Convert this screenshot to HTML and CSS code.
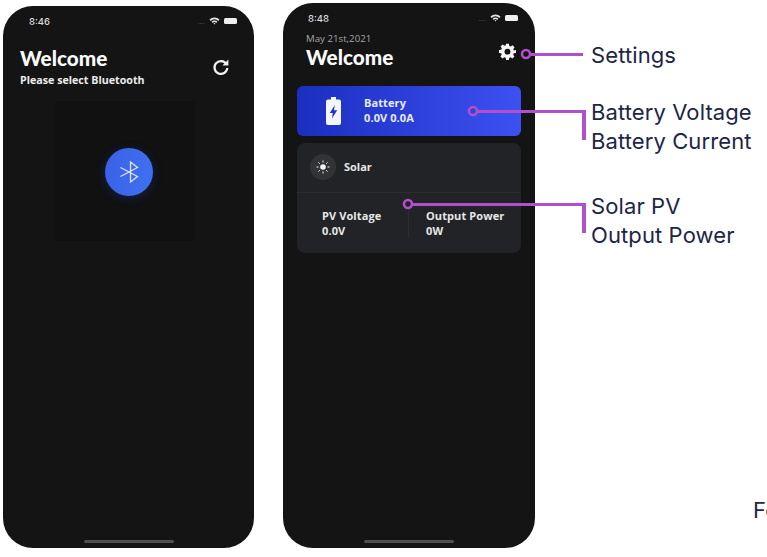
FILE: index.html
```html
<!DOCTYPE html>
<html lang="en">
<head>
  <meta charset="UTF-8" />
  <meta name="viewport" content="width=device-width, initial-scale=1.0"/>
  <title>Solar Controller App</title>
  <link rel="stylesheet" href="styles.css">
</head>
<body>
  <div class="page">

    <!-- Bluetooth screen -->
    <div class="phone phone-left">
      <div class="status">
        <span class="time">8:46</span>
        <div class="status-icons">
          <span class="dots">....</span>
          <svg width="11" height="8" viewBox="0 0 11 8"><path d="M0.5 2.6a7 7 0 0 1 10 0L9.3 3.9a5.3 5.3 0 0 0-7.6 0zM2.6 4.7a4 4 0 0 1 5.8 0L7.2 6a2.3 2.3 0 0 0-3.4 0zM4.5 6.5a1.4 1.4 0 0 1 2 0L5.5 7.6z" fill="#e6e6e6"/></svg>
          <span class="batt"></span>
        </div>
      </div>
      <div class="head-left">
        <div>
          <h1>Welcome</h1>
          <p class="sub">Please select Bluetooth</p>
        </div>
        <svg class="refresh" width="18" height="18" viewBox="0 0 18 18" fill="none">
          <path d="M14.4 6.2A6.4 6.4 0 1 0 15.3 10" stroke="#f2f2f2" stroke-width="2.2"/>
          <path d="M16.4 1.6v6h-6z" fill="#f2f2f2"/>
        </svg>
      </div>
      <div class="scan-box">
        <div class="bt-circle">
          <svg width="20" height="24" viewBox="0 0 20 24" fill="none">
            <path d="M1.5 7.500l17 9-7 5.500V2l7 5.500-17 9" stroke="#dfe6fb" stroke-width="1.300"/>
          </svg>
        </div>
      </div>
      <div class="home-bar"></div>
    </div>

    <!-- Dashboard screen -->
    <div class="phone phone-right">
      <div class="status status-right">
        <span class="time">8:48</span>
        <div class="status-icons">
          <span class="dots">....</span>
          <svg width="11" height="8" viewBox="0 0 11 8"><path d="M0.5 2.6a7 7 0 0 1 10 0L9.3 3.9a5.3 5.3 0 0 0-7.6 0zM2.6 4.7a4 4 0 0 1 5.8 0L7.2 6a2.3 2.3 0 0 0-3.4 0zM4.5 6.5a1.4 1.4 0 0 1 2 0L5.5 7.6z" fill="#e6e6e6"/></svg>
          <span class="batt"></span>
        </div>
      </div>
      <div class="head-right">
        <div>
          <p class="date">May 21st,2021</p>
          <h1>Welcome</h1>
        </div>
        <svg class="gear" width="17" height="17" viewBox="0 0 24 24">
          <path fill-rule="evenodd" fill="#f4f4f4" d="M10 1h4l.6 3.2 1.900.8 2.700-1.800 2.800 2.800-1.800 2.700.8 1.900L24 10v4l-3.200.6-.8 1.900 1.800 2.700-2.800 2.800-2.700-1.800-1.900.8L14 24h-4l-.6-3.200-1.900-.8-2.700 1.800-2.800-2.800 1.800-2.700-.8-1.900L0 14v-4l3.200-.6.8-1.900-1.800-2.700 2.800-2.800 2.700 1.800 1.900-.8zM12 8a4.200 4.200 0 1 0 0 8.400A4.200 4.200 0 0 0 12 8z"/>
        </svg>
      </div>

      <div class="battery-card">
        <svg class="battery-icon" width="15" height="28" viewBox="0 0 15 28">
          <path fill-rule="evenodd" fill="#f4f6ff" d="M5 0h5v2.500h3a2 2 0 0 1 2 2V26a2 2 0 0 1-2 2H2a2 2 0 0 1-2-2V4.500a2 2 0 0 1 2-2h3zM8.800 8L3.800 16h3l-.8 5.500 5.200-8.200H8z"/>
        </svg>
        <div class="card-text">
          <div>Battery</div>
          <div>0.0V 0.0A</div>
        </div>
      </div>

      <div class="solar-card">
        <div class="solar-top">
          <span class="sun-circle">
            <svg width="14" height="14" viewBox="0 0 14 14" stroke="#f2f2f2" stroke-width="1">
              <circle cx="7" cy="7" r="2.800" fill="#f6f6f6" stroke="none"/>
              <path d="M7 0.500v2M7 11.500v2M0.500 7h2M11.500 7h2M2.400 2.400l1.400 1.400M10.200 10.200l1.400 1.400M2.400 11.600l1.400-1.400M10.200 3.800l1.400-1.400"/>
            </svg>
          </span>
          <span class="solar-name">Solar</span>
        </div>
        <div class="solar-stats">
          <div class="stat stat-pv">
            <div>PV Voltage</div>
            <div>0.0V</div>
          </div>
          <div class="stat stat-out">
            <div>Output Power</div>
            <div>0W</div>
          </div>
        </div>
      </div>
      <div class="home-bar"></div>
    </div>

    <!-- Labels -->
    <div class="labels">
      <div class="label label-settings">Settings</div>
      <div class="label label-battery">Battery Voltage<br>Battery Current</div>
      <div class="label label-solar">Solar PV<br>Output Power</div>
      <div class="label label-cut">Fe</div>
    </div>

    <!-- Connector lines drawn over the screens -->
    <svg class="callouts" width="767" height="557" viewBox="0 0 767 557" fill="none" stroke="#b24fcb">
      <path d="M531 54.500H583" stroke-width="3"/>
      <path d="M478 111.500H584" stroke-width="3"/>
      <path d="M584 110V140" stroke-width="4"/>
      <path d="M413 204.500H584" stroke-width="3"/>
      <path d="M584 203V233" stroke-width="4"/>
      <circle cx="526" cy="54" r="4" stroke-width="2.600" fill="#141414"/>
      <circle cx="473" cy="111" r="4" stroke-width="2.600" fill="#2e44dd"/>
      <circle cx="408" cy="204" r="4" stroke-width="2.600" fill="#222326"/>
    </svg>
  </div>
</body>
</html>
```

FILE: styles.css
```css
* {
  box-sizing: border-box;
}

body {
  margin: 0;
  background: #fff;
  font-family: 'Open Sans', sans-serif;
  overflow: hidden;
}

p, h1 {
  margin: 0;
}

.page {
  position: relative;
  display: flex;
  align-items: flex-start;
  width: 767px;
  height: 557px;
  padding-left: 3px;
  overflow: hidden;
}

.phone {
  position: relative;
  display: flex;
  flex-direction: column;
  flex: none;
  background: #141414;
  border-radius: 30px;
  color: #f4f4f4;
}

.phone-left {
  width: 251px;
  height: 542px;
  margin-top: 6px;
}

.phone-right {
  width: 252px;
  height: 545px;
  margin-top: 3px;
  margin-left: 29px;
}

.status {
  display: flex;
  justify-content: space-between;
  align-items: center;
  height: 14px;
  margin-top: 8px;
  padding: 0 17px 0 26px;
}

.time {
  font-family: 'Inter', sans-serif;
  font-size: 9.5px;
  font-weight: 500;
  color: #dcdcdc;
}

.status-icons {
  display: flex;
  align-items: center;
  gap: 4px;
}

.dots {
  font-size: 7px;
  color: #555;
}

.batt {
  width: 13px;
  height: 6px;
  background: #eee;
  border-radius: 1.500px;
}

h1 {
  font-family: 'Lato', sans-serif;
  font-size: 20.700px;
  font-weight: 900;
  line-height: 24px;
  color: #fafafa;
}

.head-left {
  display: flex;
  justify-content: space-between;
  padding: 18px 24px 0 17px;
}

.sub {
  margin-top: 4px;
  font-size: 10.700px;
  font-weight: 700;
  line-height: 12px;
  color: #ececec;
}

.refresh {
  margin-top: 12px;
}

.scan-box {
  display: flex;
  align-items: center;
  justify-content: center;
  width: 140px;
  height: 140px;
  margin: 15px 0 0 52px;
  padding: 2px 0 0 8px;
  background: #111112;
}

.bt-circle {
  display: flex;
  align-items: center;
  justify-content: center;
  width: 48px;
  height: 48px;
  border-radius: 50%;
  background: linear-gradient(100deg, #3a62e6, #3f70f0);
  box-shadow: 0 2px 10px rgba(30, 60, 180, 0.35);
}

.home-bar {
  position: absolute;
  left: 81px;
  bottom: 5px;
  width: 90px;
  height: 3px;
  border-radius: 2px;
  background: #505050;
}

.status-right {
  padding-left: 25px;
  margin-top: 8px;
}

.head-right {
  display: flex;
  justify-content: space-between;
  align-items: center;
  padding: 8px 19px 0 23px;
}

.date {
  font-size: 9.700px;
  line-height: 12px;
  color: #a4a4a4;
}

.gear {
  margin-top: 1px;
}

.battery-card {
  display: flex;
  align-items: center;
  height: 50px;
  margin: 17px 14px 0;
  padding-left: 29px;
  border-radius: 6px;
  background: linear-gradient(90deg, #1a2fbf, #3d50f2);
}

.card-text {
  margin: -2px 0 0 23px;
  font-size: 11px;
  font-weight: 700;
  line-height: 15px;
  letter-spacing: 0.1px;
  color: #e8ebff;
}

.solar-card {
  height: 110px;
  margin: 7px 14px 0;
  border-radius: 8px;
  background: #222326;
}

.solar-top {
  display: flex;
  align-items: center;
  gap: 8px;
  height: 50px;
  padding: 0 13px 1px;
  border-bottom: 1px solid #2b2c2f;
}

.sun-circle {
  display: flex;
  align-items: center;
  justify-content: center;
  width: 26px;
  height: 26px;
  border-radius: 50%;
  background: #323335;
}

.solar-name {
  margin-top: -2px;
  font-size: 11px;
  font-weight: 700;
  color: #e8e8e8;
}

.solar-stats {
  display: flex;
  padding-top: 15px;
}

.stat {
  font-size: 11px;
  font-weight: 700;
  line-height: 15px;
  letter-spacing: 0.1px;
  color: #e8e8e8;
}

.stat-pv {
  width: 112px;
  padding-left: 25px;
  border-right: 1px solid #2b2c2f;
}

.stat-out {
  padding-left: 17px;
}

.labels {
  display: flex;
  flex-direction: column;
  flex: none;
  margin-left: 56px;
  padding-top: 41px;
  font-family: 'Inter', sans-serif;
  font-size: 22px;
  line-height: 29.500px;
  letter-spacing: 0.1px;
  color: #1e2546;
}

.label-battery {
  margin-top: 27px;
}

.label-solar {
  margin-top: 35px;
}

.label-cut {
  margin: 245px 0 0 162px;
}

.callouts {
  position: absolute;
  top: 0;
  left: 0;
}
```
